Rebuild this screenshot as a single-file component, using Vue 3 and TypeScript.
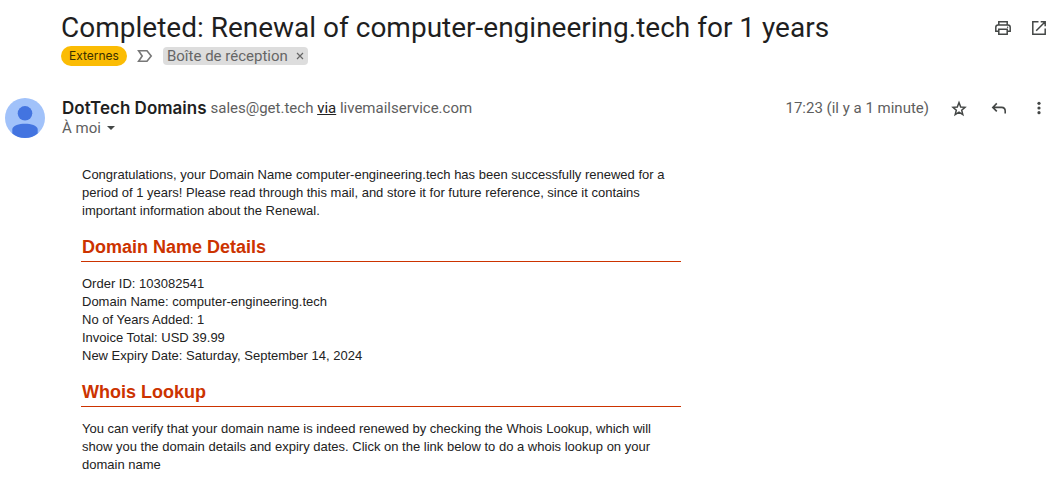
<script setup lang="ts">
interface Detail {
  label: string
  value: string
}

const subject = 'Completed: Renewal of computer-engineering.tech for 1 years'

const details: Detail[] = [
  { label: 'Order ID', value: '103082541' },
  { label: 'Domain Name', value: 'computer-engineering.tech' },
  { label: 'No of Years Added', value: '1' },
  { label: 'Invoice Total', value: 'USD 39.99' },
  { label: 'New Expiry Date', value: 'Saturday, September 14, 2024' },
]
</script>

<template>
  <main class="mail">
    <header class="subject">
      <div class="subject-main">
        <h1>{{ subject }}</h1>
        <div class="labels">
          <span class="external">Externes</span>
          <button class="marker" type="button" aria-label="Important">
            <svg width="16" height="14" viewBox="0 0 16 14">
              <path d="M1.6 1.7H10L14.2 7L10 12.3H1.6L5.2 7Z" fill="none" stroke="#777" stroke-width="1.6" />
            </svg>
          </button>
          <span class="chip">
            Boîte de réception
            <button class="remove" type="button" aria-label="Supprimer le libellé">
              <svg width="8" height="8" viewBox="0 0 8 8">
                <path d="M1 1L7 7M7 1L1 7" stroke="#666" stroke-width="1.2" />
              </svg>
            </button>
          </span>
        </div>
      </div>
      <div class="tools">
        <button class="icon" type="button" aria-label="Imprimer">
          <svg width="20" height="20" viewBox="0 0 20 20" fill="none" stroke="#444746" stroke-width="1.5">
            <path d="M5.8 6.8V3.8H14.2V6.8M5.6 13.2H2.8V9.2Q2.8 6.9 5 6.9H15Q17.2 6.9 17.2 9.2V13.2H14.4M5.8 11.2H14.2V16.2H5.8Z" />
            <circle cx="14.6" cy="9.2" r=".7" fill="#444746" stroke="none" />
          </svg>
        </button>
        <button class="icon" type="button" aria-label="Ouvrir dans une nouvelle fenêtre">
          <svg width="20" height="20" viewBox="0 0 20 20" fill="none" stroke="#444746" stroke-width="1.5">
            <path d="M9.5 3.8H3.8V16.2H16.2V10.5M11.7 3.8H16.2V8.3M16.2 3.8L7.2 12.8" />
          </svg>
        </button>
      </div>
    </header>

    <section class="sender">
      <svg class="avatar" width="40" height="40" viewBox="0 0 40 40" aria-hidden="true">
        <circle cx="20" cy="20" r="20" fill="#a1c2fa" />
        <circle cx="20" cy="15.3" r="7.3" fill="#4374e0" />
        <path d="M7.3 35.4V31C8 27.5 14 25.8 20 25.8S32 27.5 32.7 31V35.4A20 20 0 0 1 7.3 35.4Z" fill="#4374e0" />
      </svg>
      <div class="who">
        <div class="from">
          <strong>DotTech Domains</strong>
          <span class="address">sales@get.tech <a href="#via">via</a> livemailservice.com</span>
        </div>
        <button class="to" type="button">
          À moi
          <svg width="8" height="4" viewBox="0 0 8 4"><path d="M0 0H8L4 4Z" fill="#444746" /></svg>
        </button>
      </div>
      <div class="meta">
        <time datetime="17:23">17:23 (il y a 1 minute)</time>
        <div class="tools">
          <button class="icon" type="button" aria-label="Suivre">
            <svg width="20" height="20" viewBox="0 0 20 20" fill="none" stroke="#444746" stroke-width="1.5">
              <path d="M10 4.6L11.7 9L16 9.3L12.7 12.2L13.8 16.6L10 14.2L6.2 16.6L7.3 12.2L4 9.3L8.3 9Z" />
            </svg>
          </button>
          <button class="icon" type="button" aria-label="Répondre">
            <svg width="20" height="20" viewBox="0 0 20 20" fill="none" stroke="#444746" stroke-width="1.6">
              <path d="M7.8 5.4L3.8 9.4L7.8 13.4M3.8 9.4H12.6Q16.2 9.6 16.2 13V15.6" />
            </svg>
          </button>
          <button class="icon" type="button" aria-label="Plus">
            <svg width="20" height="20" viewBox="0 0 20 20" fill="#444746">
              <circle cx="10" cy="5.3" r="1.6" />
              <circle cx="10" cy="10" r="1.6" />
              <circle cx="10" cy="14.7" r="1.6" />
            </svg>
          </button>
        </div>
      </div>
    </section>

    <article class="body">
      <p>
        Congratulations, your Domain Name computer-engineering.tech has been successfully renewed for a
        period of 1 years! Please read through this mail, and store it for future reference, since it contains
        important information about the Renewal.
      </p>
      <h2>Domain Name Details</h2>
      <ul>
        <li v-for="item in details" :key="item.label">{{ item.label }}: {{ item.value }}</li>
      </ul>
      <h2>Whois Lookup</h2>
      <p>
        You can verify that your domain name is indeed renewed by checking the Whois Lookup, which will
        show you the domain details and expiry dates. Click on the link below to do a whois lookup on your
        domain name
      </p>
    </article>
  </main>
</template>

<style>
body {
  margin: 0;
  background: #fff;
}
</style>

<style scoped>
.mail {
  padding: 10px 12px 8px 5px;
  font-family: Roboto, "Liberation Sans", sans-serif;
  font-size: 15px;
  line-height: 20px;
  color: #5e5e5e;
}

button {
  display: inline-flex;
  align-items: center;
  justify-content: center;
  padding: 0;
  border: 0;
  background: none;
  color: inherit;
  font: inherit;
  cursor: pointer;
}

svg {
  display: block;
  flex: none;
}

.subject {
  display: flex;
  justify-content: space-between;
  gap: 16px;
  padding-left: 56px;
}

h1 {
  margin: 0;
  font-size: 28px;
  font-weight: 400;
  line-height: 36px;
  color: #1f1f1f;
}

.labels {
  display: flex;
  align-items: center;
}

.external {
  padding: 0 8px;
  border-radius: 10px;
  background: #fbbc04;
  color: #3c3000;
  font-family: Inter, Roboto, sans-serif;
  font-size: 12px;
}

.marker {
  margin: 0 10px;
}

.chip {
  display: flex;
  align-items: center;
  gap: 8px;
  padding: 0 4px;
  border-radius: 4px;
  background: #ddd;
  color: #666;
  line-height: 18px;
}

.tools {
  display: flex;
  gap: 20px;
}

.icon {
  width: 20px;
  height: 20px;
}

.subject .tools {
  gap: 16px;
  padding-top: 8px;
}

.sender {
  display: flex;
  align-items: flex-start;
  margin-top: 32px;
}

.who {
  flex: 1;
  padding-left: 17px;
}

.from {
  display: flex;
  gap: 4px;
}

.from strong {
  font-family: Inter, Roboto, sans-serif;
  font-size: 17px;
  font-weight: 600;
  color: #1f1f1f;
}

.from a {
  color: #222;
}

.to {
  gap: 6px;
}

.meta {
  display: flex;
  gap: 20px;
}

.body {
  max-width: 600px;
  margin: 28px 0 0 76px;
  font-family: "Liberation Sans", Arial, sans-serif;
  font-size: 13px;
  line-height: 18px;
  color: #222;
}

.body p,
.body ul {
  margin: 0;
  padding: 0 0 0 1px;
  list-style: none;
}

h2 {
  margin: 15px 0 13px;
  padding: 0 0 2px 1px;
  border-bottom: 1px solid #c30;
  font-size: 18px;
  line-height: 24px;
  color: #c30;
}
</style>
